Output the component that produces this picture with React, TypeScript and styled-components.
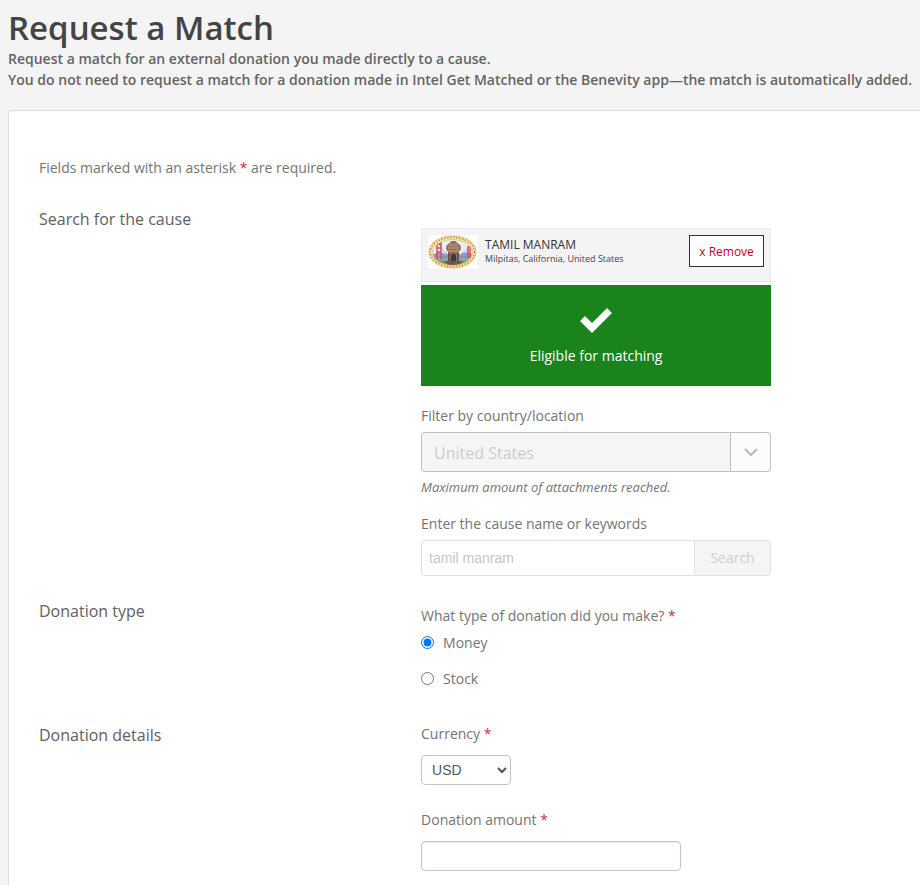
import React, { useState } from "react";
import styled, { createGlobalStyle } from "styled-components";

const GlobalStyle = createGlobalStyle`
  *, *::before, *::after { box-sizing: border-box; }
  body {
    margin: 0;
    background: #f4f4f4;
    color: #747474;
    font-family: "Open Sans", sans-serif;
    font-size: 14px;
    line-height: 21px;
  }
`;

const Page = styled.div`
  display: flex;
  flex-direction: column;
  min-height: 100vh;
  padding-left: 8px;
`;

const Header = styled.header`
  padding: 8px 0 20px;
`;

const Title = styled.h1`
  margin: 0;
  color: #444;
  font-size: 33px;
  line-height: 40px;
  font-weight: 600;
`;

const Intro = styled.p`
  margin: 0;
  color: #646464;
  font-weight: 600;
`;

const Panel = styled.main`
  flex: 1;
  padding: 46px 32px 14px 30px;
  background: #fff;
  border: 1px solid #dedede;
  border-width: 1px 0 0 1px;
  border-top-left-radius: 4px;
`;

const Note = styled.p`
  margin: 0 0 29px;
`;

const Asterisk = styled.span`
  color: #b5373f;
`;

const Section = styled.section<{ $gap?: number }>`
  display: grid;
  grid-template-columns: 45% minmax(0, 350px);
  align-items: start;
  margin-bottom: ${(p) => p.$gap ?? 0}px;
`;

const SectionTitle = styled.h2`
  margin: 0;
  color: #606060;
  font-size: 16px;
  line-height: 24px;
  font-weight: 400;
`;

const Controls = styled.div<{ $top?: number }>`
  display: flex;
  flex-direction: column;
  padding-top: ${(p) => p.$top ?? 0}px;
`;

const CauseCard = styled.div`
  display: flex;
  align-items: flex-start;
  height: 54px;
  padding: 6px;
  background: #f4f4f4;
  border: 1px solid #ebebeb;
`;

const CauseText = styled.div`
  flex: 1;
  min-width: 0;
  padding-left: 7px;
`;

const CauseName = styled.div`
  padding-top: 1px;
  color: #333;
  font-size: 12px;
  line-height: 17px;
`;

const CausePlace = styled.div`
  color: #444;
  font-size: 9px;
  line-height: 12px;
  white-space: nowrap;
`;

const RemoveButton = styled.button`
  width: 75px;
  height: 32px;
  padding: 2px 0 0;
  background: #fff;
  border: 1px solid #333;
  color: #c4002b;
  font: 400 12px/18px "Open Sans", sans-serif;
  cursor: pointer;
`;

const Banner = styled.div`
  display: flex;
  flex-direction: column;
  align-items: center;
  gap: 12px;
  margin: 3px 0 19px;
  padding: 23px 0 20px;
  background: #1b831b;
  color: #fff;
`;

const Label = styled.label<{ $gap?: number }>`
  margin-bottom: ${(p) => p.$gap ?? 6}px;
`;

const CountryField = styled.div`
  display: grid;
  grid-template-columns: minmax(0, 1fr) 41px;
`;

const CountrySelect = styled.select`
  grid-area: 1 / 1 / 2 / 3;
  appearance: none;
  height: 40px;
  padding: 2px 52px 0 12px;
  background: #f5f5f5;
  border: 1px solid #c0c0c0;
  border-radius: 4px;
  color: #cccccc;
  font: 400 16px/24px "Open Sans", sans-serif;
  opacity: 1;
`;

const CountryArrow = styled.span`
  grid-area: 1 / 2 / 2 / 3;
  display: flex;
  align-items: center;
  justify-content: center;
  background: #fcfcfc;
  border: 1px solid #c0c0c0;
  border-radius: 0 4px 4px 0;
  pointer-events: none;
`;

const Hint = styled.p`
  margin: 6px 0 17px;
  font-size: 13px;
  line-height: 18px;
  font-style: italic;
`;

const SearchField = styled.div`
  display: flex;
  height: 36px;
`;

const SearchInput = styled.input`
  flex: 1;
  min-width: 0;
  padding: 0 7px;
  background: #fff;
  border: 1px solid #e0e0e0;
  border-right: 0;
  border-radius: 4px 0 0 4px;
  color: #c6c6c6;
  font: 400 14px "Liberation Sans", Arial, sans-serif;
`;

const SearchButton = styled.button`
  width: 77px;
  padding: 0 0 2px;
  background: #f5f5f5;
  border: 1px solid #e0e0e0;
  border-radius: 0 4px 4px 0;
  color: #cfcfcf;
  font: 400 14px/21px "Open Sans", sans-serif;
`;

const RadioGroup = styled.fieldset`
  display: flex;
  flex-direction: column;
  gap: 15px;
  min-width: 0;
  margin: 0;
  padding: 0;
  border: 0;
`;

const Legend = styled.legend`
  margin-bottom: 6px;
  padding: 0;
`;

const RadioLabel = styled.label`
  display: flex;
  align-items: center;
  gap: 9px;
`;

const Radio = styled.input`
  width: 13px;
  height: 13px;
  margin: 0;
`;

const CurrencySelect = styled.select`
  width: 90px;
  height: 30px;
  margin-bottom: 24px;
  padding: 0 6px;
  background: #fff;
  border: 1px solid #c4c4c4;
  border-radius: 4px;
  color: #555;
  font: 400 14px "Liberation Sans", Arial, sans-serif;
`;

const AmountInput = styled.input`
  width: 260px;
  max-width: 100%;
  height: 30px;
  padding: 4px 6px;
  background: #fff;
  border: 1px solid #c4c4c4;
  border-radius: 4px;
  box-shadow: inset 0 1px 1px rgba(0, 0, 0, 0.075);
  color: #555;
  font: 400 14px "Liberation Sans", Arial, sans-serif;
`;

const Required = () => <Asterisk aria-hidden="true">*</Asterisk>;

const CauseLogo = () => (
  <svg width="50" height="34" viewBox="0 0 50 34" aria-hidden="true">
    <defs>
      <clipPath id="scene">
        <ellipse cx="24.500" cy="17.500" rx="20" ry="13" />
      </clipPath>
    </defs>
    <rect width="50" height="34" fill="#fff" />
    <ellipse cx="24.500" cy="17" rx="23.500" ry="16" fill="#fbefb8" stroke="#e0b850" />
    <ellipse
      cx="24.500"
      cy="17"
      rx="22"
      ry="14.500"
      fill="none"
      stroke="#c08a5c"
      strokeWidth="1.500"
      strokeDasharray="1.500 1.500"
    />
    <g clipPath="url(#scene)">
      <rect width="50" height="34" fill="#e6eefa" />
      <path d="M3 20l8-3 7 2h14l7-2 8 3v7H3z" fill="#7f9fd0" />
      <path d="M3 23h44v4H3z" fill="#86a9b8" />
      <path d="M3 27q22-3 44 0v7H3z" fill="#8a9450" />
      <path d="M11 9q6 12 14 12 9 0 15-8" fill="none" stroke="#d99a9a" />
      <path d="M3 22h44" stroke="#b0757a" />
      <path
        d="M9 7v18M13 7v18M9 9h4M9 13h4M9 17h4M40 11v12M42 11v12"
        fill="none"
        stroke="#dc4c5c"
        strokeWidth="1.500"
      />
      <path d="M18 14q0-5 4-6l1-2h5l1 2q4 1 4 6l-2 3v9H20v-9z" fill="#94705a" />
      <path d="M21 10h9M20 13h11M20 16h11" stroke="#c9a07e" />
      <path d="M23 27v-7q2.500-3 5 0v7z" fill="#3d3644" />
      <path d="M21 18v8M30 18v8" stroke="#5d4650" strokeWidth="1.500" />
      <path d="M17 27h17M19 29h13" stroke="#6d5a4a" strokeWidth="2" />
    </g>
    <ellipse cx="24.500" cy="17.500" rx="20" ry="13" fill="none" stroke="#e8c468" />
  </svg>
);

export default function App() {
  const [type, setType] = useState("money");
  const [amount, setAmount] = useState("");

  return (
    <>
      <GlobalStyle />
      <Page>
        <Header>
          <Title>Request a Match</Title>
          <Intro>Request a match for an external donation you made directly to a cause.</Intro>
          <Intro>
            You do not need to request a match for a donation made in Intel Get Matched or the
            Benevity app—the match is automatically added.
          </Intro>
        </Header>
        <Panel>
          <Note>
            Fields marked with an asterisk <Asterisk>*</Asterisk> are required.
          </Note>

          <Section $gap={23}>
            <SectionTitle>Search for the cause</SectionTitle>
            <Controls $top={21}>
              <CauseCard>
                <CauseLogo />
                <CauseText>
                  <CauseName>TAMIL MANRAM</CauseName>
                  <CausePlace>Milpitas, California, United States</CausePlace>
                </CauseText>
                <RemoveButton type="button">x Remove</RemoveButton>
              </CauseCard>
              <Banner>
                <svg width="32" height="25" viewBox="0 0 32 25" aria-hidden="true">
                  <path d="M0 13l5-5 7 7L27 0l5 5-20 20z" fill="#fff" />
                </svg>
                <span>Eligible for matching</span>
              </Banner>
              <Label htmlFor="country">Filter by country/location</Label>
              <CountryField>
                <CountrySelect id="country" disabled defaultValue="US">
                  <option value="US">United States</option>
                </CountrySelect>
                <CountryArrow>
                  <svg width="14" height="8" viewBox="0 0 14 8" aria-hidden="true">
                    <path d="M1 1l6 6 6-6" fill="none" stroke="#b8b8b8" strokeWidth="2" />
                  </svg>
                </CountryArrow>
              </CountryField>
              <Hint>Maximum amount of attachments reached.</Hint>
              <Label htmlFor="keywords">Enter the cause name or keywords</Label>
              <SearchField>
                <SearchInput id="keywords" type="text" defaultValue="tamil manram" disabled />
                <SearchButton type="button" disabled>
                  Search
                </SearchButton>
              </SearchField>
            </Controls>
          </Section>

          <Section $gap={34}>
            <SectionTitle>Donation type</SectionTitle>
            <Controls $top={6}>
              <RadioGroup>
                <Legend>
                  What type of donation did you make? <Required />
                </Legend>
                <RadioLabel>
                  <Radio
                    type="radio"
                    name="donation-type"
                    checked={type === "money"}
                    onChange={() => setType("money")}
                  />
                  Money
                </RadioLabel>
                <RadioLabel>
                  <Radio
                    type="radio"
                    name="donation-type"
                    checked={type === "stock"}
                    onChange={() => setType("stock")}
                  />
                  Stock
                </RadioLabel>
              </RadioGroup>
            </Controls>
          </Section>

          <Section>
            <SectionTitle>Donation details</SectionTitle>
            <Controls>
              <Label htmlFor="currency" $gap={11}>
                Currency <Required />
              </Label>
              <CurrencySelect id="currency" defaultValue="USD">
                <option>USD</option>
                <option>CAD</option>
                <option>EUR</option>
              </CurrencySelect>
              <Label htmlFor="amount" $gap={11}>
                Donation amount <Required />
              </Label>
              <AmountInput
                id="amount"
                type="text"
                value={amount}
                onChange={(e) => setAmount(e.target.value)}
              />
            </Controls>
          </Section>
        </Panel>
      </Page>
    </>
  );
}
